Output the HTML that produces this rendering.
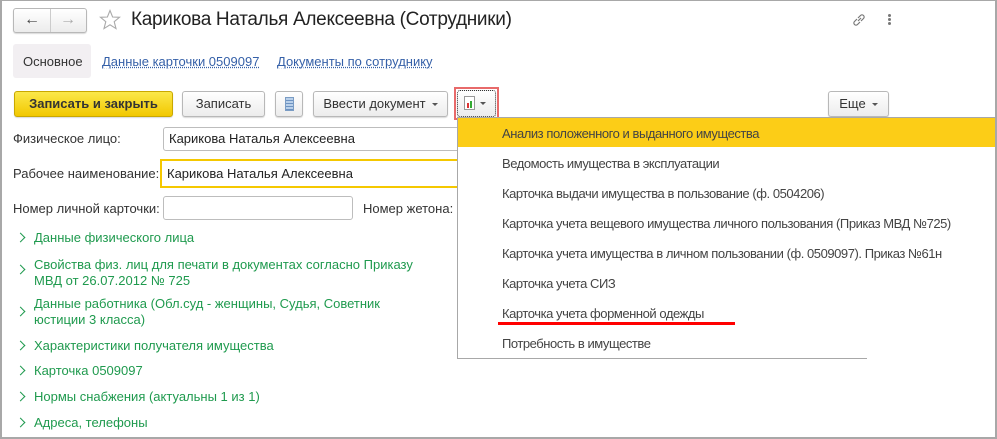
<!DOCTYPE html>
<html><head><meta charset="utf-8"><style>
*{box-sizing:border-box;margin:0;padding:0}
body{width:997px;height:439px;overflow:hidden;background:#fff;font-family:"Liberation Sans",Arial,sans-serif;font-size:13px;color:#333;position:relative}
.frame{position:absolute;left:0;top:0;width:997px;height:439px;border:2px solid #a8a8a8;border-top:1px solid #a8a8a8;pointer-events:none;z-index:20}
.a{position:absolute;white-space:nowrap}
.btn{position:absolute;border:1px solid #b8b8b8;border-radius:3px;background:linear-gradient(#fff,#ececec);box-shadow:0 1px 1px rgba(0,0,0,.15);height:26px;line-height:24px;text-align:center;color:#333;font-size:13px}
.inp{position:absolute;border:1px solid #bdbdbd;border-radius:3px;background:#fff;height:24px;line-height:22px;padding-left:5px;color:#222;font-size:13px}
.g{position:absolute;left:34px;color:#1f9a4e;font-size:13px;line-height:16px}
.chev{position:absolute;left:17px;width:7px;height:7px;border-right:1.8px solid #1f9a4e;border-top:1.8px solid #1f9a4e;transform:rotate(45deg)}
.lnk{color:#3560a8;text-decoration:underline;text-decoration-style:dotted}
.mi{position:absolute;left:502px;font-size:13px;color:#444;letter-spacing:-0.45px}
.caret{display:inline-block;width:0;height:0;border-left:3px solid transparent;border-right:3px solid transparent;border-top:3px solid #555;vertical-align:middle;margin-left:6px}
</style></head><body>
<div class="frame"></div>
<div class="btn" style="left:13px;top:8px;width:74px;height:25px"></div>
<div class="a" style="left:50px;top:9px;width:1px;height:23px;background:#ccc"></div>
<div class="a" style="left:24px;top:11px;font-size:16px;color:#444;font-weight:bold">&#8592;</div>
<div class="a" style="left:60px;top:11px;font-size:16px;color:#aaa;font-weight:bold">&#8594;</div>
<svg class="a" style="left:99px;top:9px" width="22" height="22" viewBox="0 0 22 22"><polygon points="11,1.5 13.6,8 20.5,8.3 15.2,12.7 17,19.6 11,15.8 5,19.6 6.8,12.7 1.5,8.3 8.4,8" fill="none" stroke="#aaa" stroke-width="1.1"/></svg>
<div class="a" style="left:131px;top:9px;font-size:19px;color:#222;letter-spacing:-0.3px">Карикова Наталья Алексеевна (Сотрудники)</div>
<svg class="a" style="left:851px;top:12px" width="16" height="16" viewBox="0 0 16 16"><path d="M7 9 L10 6 M6 7 L3.5 9.5 a2 2 0 0 0 3 3 L9 10 M10 9 L12.5 6.5 a2 2 0 0 0 -3 -3 L7 6" fill="none" stroke="#777" stroke-width="1.2"/></svg>
<div class="a" style="left:888px;top:14px;width:3px;height:3px;background:#777;border-radius:2px;box-shadow:0 4px 0 #777,0 8px 0 #777"></div>
<div class="a" style="left:13px;top:44px;width:78px;height:34px;background:#f2eff2;border-radius:3px"></div>
<div class="a" style="left:23px;top:54px;color:#333">Основное</div>
<div class="a lnk" style="left:102px;top:54px">Данные карточки 0509097</div>
<div class="a lnk" style="left:277px;top:54px">Документы по сотруднику</div>
<div class="btn" style="left:14px;top:91px;width:159px;background:linear-gradient(#fbe84a,#f2c800);border-color:#c9a800;font-weight:bold;color:#333">Записать и закрыть</div>
<div class="btn" style="left:182px;top:91px;width:83px">Записать</div>
<div class="btn" style="left:275px;top:91px;width:28px"><div style="position:absolute;left:9px;top:5px;width:9px;height:14px;border:1px solid #7a9cc4;background:repeating-linear-gradient(#b9d0ea 0 2px,#6d93c2 2px 3px)"></div></div>
<div class="btn" style="left:313px;top:91px;width:135px">Ввести документ<span class="caret"></span></div>
<div class="a" style="left:454px;top:87px;width:45px;height:33px;border:2px solid #e86a6a"></div>
<div class="btn" style="left:457px;top:90px;width:39px;height:27px;border:1px dotted #333"><div style="position:absolute;left:6px;top:5px;width:11px;height:14px;border:1px solid #999;background:#fff"><div style="position:absolute;left:2px;top:6px;width:2px;height:5px;background:#d33"></div><div style="position:absolute;left:5px;top:4px;width:2px;height:7px;background:#3a3"></div></div><span class="caret" style="position:absolute;left:22px;top:11px;margin:0"></span></div>
<div class="btn" style="left:828px;top:91px;width:61px">Еще<span class="caret"></span></div>
<div class="a" style="left:13px;top:131px">Физическое лицо:</div>
<div class="inp" style="left:163px;top:127px;width:310px">Карикова Наталья Алексеевна</div>
<div class="a" style="left:13px;top:166px">Рабочее наименование:</div>
<div class="inp" style="left:160px;top:159px;width:320px;height:29px;line-height:26px;border:2px solid #f5c800;border-radius:0">Карикова Наталья Алексеевна</div>
<div class="a" style="left:13px;top:201px">Номер личной карточки:</div>
<div class="inp" style="left:163px;top:196px;width:190px"></div>
<div class="a" style="left:363px;top:201px">Номер жетона:</div>
<div class="chev" style="top:234px"></div><div class="g" style="top:230px">Данные физического лица</div>
<div class="chev" style="top:266px"></div><div class="g" style="top:257px">Свойства физ. лиц для печати в документах согласно Приказу<br>МВД от 26.07.2012 № 725</div>
<div class="chev" style="top:308px"></div><div class="g" style="top:296px">Данные работника (Обл.суд - женщины, Судья, Советник<br>юстиции 3 класса)</div>
<div class="chev" style="top:342px"></div><div class="g" style="top:338px">Характеристики получателя имущества</div>
<div class="chev" style="top:367px"></div><div class="g" style="top:363px">Карточка 0509097</div>
<div class="chev" style="top:393px"></div><div class="g" style="top:389px">Нормы снабжения (актуальны 1 из 1)</div>
<div class="chev" style="top:419px"></div><div class="g" style="top:415px">Адреса, телефоны</div>
<div class="a" style="left:457px;top:117px;width:540px;height:242px;background:#fff;border-left:1px solid #a8a8a8;border-top:1px solid #a8a8a8"></div>
<div class="a" style="left:457px;top:358px;width:410px;height:1px;background:#a8a8a8"></div>
<div class="a" style="left:458px;top:118px;width:537px;height:29px;background:#fccd17"></div>
<div class="mi" style="top:126px">Анализ положенного и выданного имущества</div>
<div class="mi" style="top:156px">Ведомость имущества в эксплуатации</div>
<div class="mi" style="top:186px">Карточка выдачи имущества в пользование (ф. 0504206)</div>
<div class="mi" style="top:216px">Карточка учета вещевого имущества личного пользования (Приказ МВД №725)</div>
<div class="mi" style="top:246px">Карточка учета имущества в личном пользовании (ф. 0509097). Приказ №61н</div>
<div class="mi" style="top:276px">Карточка учета СИЗ</div>
<div class="mi" style="top:306px">Карточка учета форменной одежды</div>
<div class="a" style="left:498px;top:322px;width:237px;height:3px;background:#f00"></div>
<div class="mi" style="top:336px">Потребность в имуществе</div>
</body></html>
